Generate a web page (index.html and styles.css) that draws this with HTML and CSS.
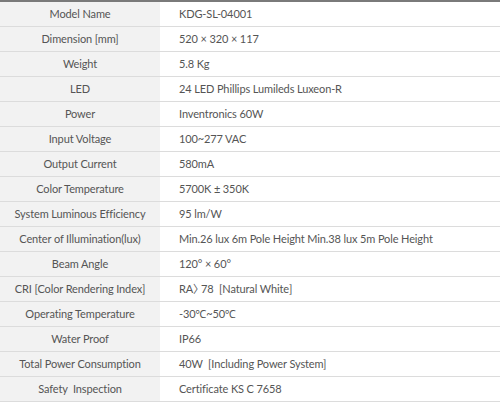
FILE: index.html
```html
<!DOCTYPE html>
<html>
<head>
<meta charset="utf-8">
<link rel="stylesheet" href="styles.css">
</head>
<body>
<table class="spec">
<tbody>
<tr><th>Model Name</th><td>KDG-SL-04001</td></tr>
<tr><th>Dimension [mm]</th><td>520 × 320 × 117</td></tr>
<tr><th>Weight</th><td>5.8 Kg</td></tr>
<tr><th>LED</th><td>24 LED Phillips Lumileds Luxeon-R</td></tr>
<tr><th>Power</th><td>Inventronics 60W</td></tr>
<tr><th>Input Voltage</th><td>100~277 VAC</td></tr>
<tr><th>Output Current</th><td>580mA</td></tr>
<tr><th>Color Temperature</th><td>5700K ± 350K</td></tr>
<tr><th>System Luminous Efficiency</th><td>95 lm/W</td></tr>
<tr><th>Center of Illumination(lux)</th><td>Min.26 lux 6m Pole Height Min.38 lux 5m Pole Height</td></tr>
<tr><th>Beam Angle</th><td>120° × 60°</td></tr>
<tr><th>CRI [Color Rendering Index]</th><td>RA<span class="gt">〉</span>78 &nbsp;[Natural White]</td></tr>
<tr><th>Operating Temperature</th><td>-30℃~50℃</td></tr>
<tr><th>Water Proof</th><td>IP66</td></tr>
<tr><th>Total Power Consumption</th><td>40W &nbsp;[Including Power System]</td></tr>
<tr><th>Safety &nbsp;Inspection</th><td>Certificate KS C 7658</td></tr>
</tbody>
</table>
</body>
</html>
```
FILE: styles.css
```css
html, body {
  margin: 0;
  padding: 0;
  background: #fff;
}
.spec {
  width: 500px;
  border-collapse: collapse;
  border-top: 2px solid #7a7a7a;
  font-family: Lato, "Noto Sans", "Noto Sans CJK KR", sans-serif;
  font-size: 11px;
  letter-spacing: -0.12px;
  color: #555;
}
.spec th, .spec td {
  height: 24px;
  padding: 0;
  border-bottom: 1px solid #dcdcdc;
  font-weight: normal;
  white-space: nowrap;
  line-height: 24px;
}
.spec th {
  width: 160px;
  background: #f2f2f2;
  text-align: center;
}
.spec td {
  text-align: left;
  padding-left: 19px;
}
.gt {
  letter-spacing: -3px;
}
```
